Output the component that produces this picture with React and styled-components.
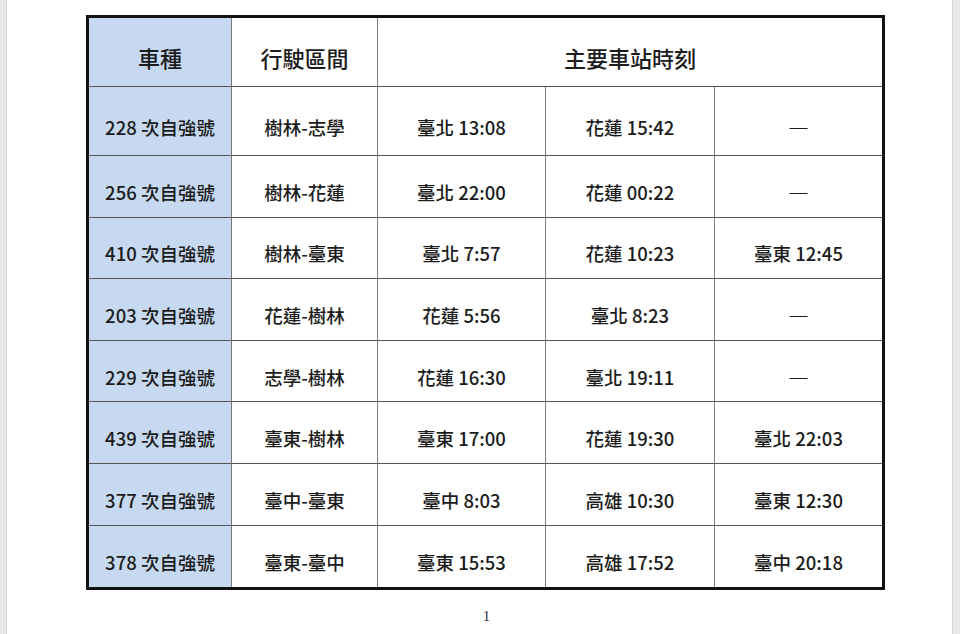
import React from "react";
import styled, { createGlobalStyle } from "styled-components";

const GlobalStyle = createGlobalStyle`
  html, body {
    margin: 0;
    padding: 0;
    background: #ffffff;
  }
  body {
    font-family: "Noto Sans CJK TC", "Noto Sans", sans-serif;
  }
`;

const Viewer = styled.div`
  display: flex;
  width: 960px;
  height: 634px;
  overflow: hidden;
`;

const Gutter = styled.div`
  width: ${(p) => p.$w}px;
  flex-shrink: 0;
  background: #e8e8e8;
  border-${(p) => p.$side}: 1px solid #d8d8d8;
  box-sizing: border-box;
`;

const Page = styled.div`
  flex: 1;
  background: #ffffff;
  padding-top: 15px;
  padding-left: 79px;
  box-sizing: border-box;
`;

const Sheet = styled.div`
  width: 799px;
`;

const Table = styled.table`
  width: 799px;
  box-sizing: border-box;
  border: 3px solid #111111;
  border-spacing: 0;
  table-layout: fixed;
  color: #1c1c1c;
`;

const Row = styled.tr`
  height: ${(p) => p.$h}px;
`;

const Cell = styled.td`
  padding: ${(p) => (p.$head ? "9px" : "11px")} 0 0 0;
  text-align: center;
  vertical-align: middle;
  font-size: ${(p) => (p.$head ? "22px" : "18.5px")};
  font-weight: 500;
  white-space: nowrap;
  background: ${(p) => (p.$blue ? "#c6d9f0" : "#ffffff")};
  border-right: ${(p) => (p.$last ? "none" : "1px solid #7a7a7a")};
  border-bottom: ${(p) => (p.$bottom ? "none" : "1px solid #555555")};
`;

const Dash = styled.span`
  font-size: 21px;
  font-weight: 400;
  font-feature-settings: "fwid";
`;

const PageNumber = styled.div`
  margin-top: 18px;
  padding-left: 2px;
  text-align: center;
  font-family: "Liberation Serif", serif;
  font-size: 15px;
  color: #333333;
`;

const widths = [143, 146, 168, 169, 167];

const trains = [
  ["228 次自強號", "樹林-志學", "臺北 13:08", "花蓮 15:42", "—"],
  ["256 次自強號", "樹林-花蓮", "臺北 22:00", "花蓮 00:22", "—"],
  ["410 次自強號", "樹林-臺東", "臺北 7:57", "花蓮 10:23", "臺東 12:45"],
  ["203 次自強號", "花蓮-樹林", "花蓮 5:56", "臺北 8:23", "—"],
  ["229 次自強號", "志學-樹林", "花蓮 16:30", "臺北 19:11", "—"],
  ["439 次自強號", "臺東-樹林", "臺東 17:00", "花蓮 19:30", "臺北 22:03"],
  ["377 次自強號", "臺中-臺東", "臺中 8:03", "高雄 10:30", "臺東 12:30"],
  ["378 次自強號", "臺東-臺中", "臺東 15:53", "高雄 17:52", "臺中 20:18"],
];

export default function App() {
  return (
    <>
      <GlobalStyle />
      <Viewer>
        <Gutter $w={7} $side="right" />
        <Page>
          <Sheet>
            <Table>
              <colgroup>
                {widths.map((w, i) => (
                  <col key={i} style={{ width: w }} />
                ))}
              </colgroup>
              <thead>
                <Row $h={69}>
                  <Cell as="th" $head $blue>
                    車種
                  </Cell>
                  <Cell as="th" $head>
                    行駛區間
                  </Cell>
                  <Cell as="th" $head $last colSpan={3}>
                    主要車站時刻
                  </Cell>
                </Row>
              </thead>
              <tbody>
                {trains.map((row, r) => (
                  <Row key={r} $h={r === 0 ? 69 : 61.6}>
                    {row.map((text, c) => (
                      <Cell
                        key={c}
                        $blue={c === 0}
                        $last={c === row.length - 1}
                        $bottom={r === trains.length - 1}
                      >
                        {text === "—" ? <Dash>{text}</Dash> : text}
                      </Cell>
                    ))}
                  </Row>
                ))}
              </tbody>
            </Table>
            <PageNumber>1</PageNumber>
          </Sheet>
        </Page>
        <Gutter $w={8} $side="left" />
      </Viewer>
    </>
  );
}
